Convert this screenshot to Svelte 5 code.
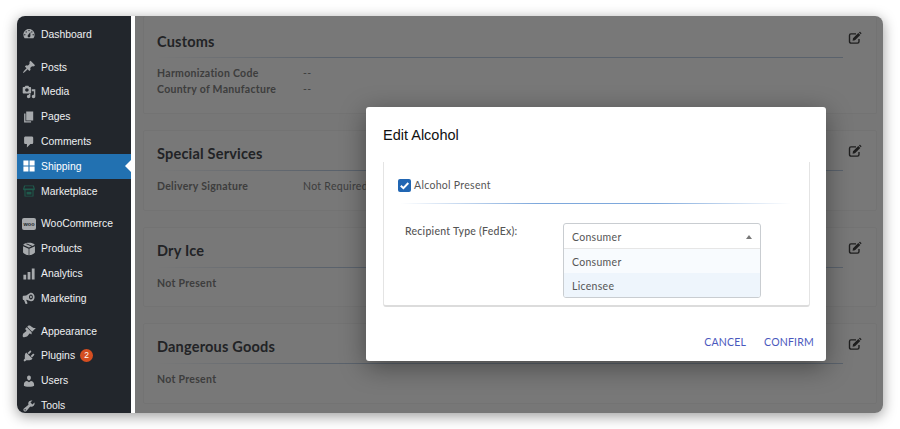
<script lang="ts">
	const menu = [
		[
			{ label: 'Dashboard', icon: 'dashboard' }
		],
		[
			{ label: 'Posts', icon: 'posts' },
			{ label: 'Media', icon: 'media' },
			{ label: 'Pages', icon: 'pages' },
			{ label: 'Comments', icon: 'comments' },
			{ label: 'Shipping', icon: 'shipping', active: true },
			{ label: 'Marketplace', icon: 'marketplace' }
		],
		[
			{ label: 'WooCommerce', icon: 'woo' },
			{ label: 'Products', icon: 'products' },
			{ label: 'Analytics', icon: 'analytics' },
			{ label: 'Marketing', icon: 'marketing' }
		],
		[
			{ label: 'Appearance', icon: 'appearance' },
			{ label: 'Plugins', icon: 'plugins', badge: 2 },
			{ label: 'Users', icon: 'users' },
			{ label: 'Tools', icon: 'tools' }
		]
	];

	const icons: Record<string, string> = {
		dashboard:
			'M3.76 16h12.48c1.1-1.37 1.76-3.11 1.76-5 0-4.42-3.58-8-8-8s-8 3.58-8 8c0 1.89.66 3.63 1.76 5zM10 4c.55 0 1 .45 1 1s-.45 1-1 1-1-.45-1-1 .45-1 1-1zM6 6c.55 0 1 .45 1 1s-.45 1-1 1-1-.45-1-1 .45-1 1-1zm8 0c.55 0 1 .45 1 1s-.45 1-1 1-1-.45-1-1 .45-1 1-1zm-5.37 5.55L12 7v6c0 1.1-.9 2-2 2s-2-.9-2-2c0-.57.24-1.08.63-1.45zM4 10c.55 0 1 .45 1 1s-.45 1-1 1-1-.45-1-1 .45-1 1-1zm12 0c.55 0 1 .45 1 1s-.45 1-1 1-1-.45-1-1 .45-1 1-1z',
		posts:
			'M10.44 3.02l1.82-1.82 6.36 6.35-1.83 1.82c-1.05-.68-2.48-.57-3.41.36l-.75.75c-.92.93-1.04 2.35-.35 3.41l-1.83 1.82-2.41-2.41-2.8 2.79c-.42.42-3.38 2.71-3.8 2.29s1.86-3.39 2.28-3.81l2.79-2.79L4.1 9.36l1.83-1.82c1.05.69 2.48.57 3.4-.36l.75-.75c.93-.92 1.05-2.35.36-3.41z',
		media:
			'M13 11V4c0-.55-.45-1-1-1h-1.67L9 1H5L3.67 3H2c-.55 0-1 .45-1 1v7c0 .55.45 1 1 1h10c.55 0 1-.45 1-1zM7 4.5c1.38 0 2.5 1.12 2.5 2.5S8.38 9.5 7 9.5 4.5 8.38 4.5 7 5.62 4.5 7 4.5zM14 6h5v10.5c0 1.38-1.12 2.5-2.5 2.5S14 17.88 14 16.5s1.12-2.5 2.5-2.5c.17 0 .34.02.5.05V9h-3V6zm-4 8.05V13h2v3.5c0 1.38-1.12 2.5-2.5 2.5S7 17.88 7 16.5 8.12 14 9.5 14c.17 0 .34.02.5.05z',
		pages: 'M6 15V2h10v13H6zm-1 1h8v2H3V5h2v11z',
		comments: 'M5 2h9c1.1 0 2 .9 2 2v7c0 1.1-.9 2-2 2h-2l-5 5v-5H5c-1.1 0-2-.9-2-2V4c0-1.1.9-2 2-2z',
		shipping: 'M2 2h7.2v7.2H2zM10.8 2H18v7.2h-7.2zM2 10.8h7.2V18H2zM10.8 10.8H18V18h-7.2z',
		marketplace:
			'M3 2h14l1.5 5c0 1.2-1 2-2 2v9H3.5V9c-1 0-2-.8-2-2zM4.5 3.2 3.4 6.6h13.2l-1.1-3.4zM5 9v7.8h10V9zM6.5 11h7v4h-7z',
		products:
			'M10 1c3.500 0 6.500.9 8 2.500v.9L10 8 2 4.400v-.9C3.500 1.900 6.500 1 10 1zM1.500 6l8 3.600V19c-3.500-.6-6.500-2-8-4zM18.500 6v9c-1.500 2-4.500 3.400-8 4V9.600zM5.500 2.900l8 3.400 1.500-.7-8-3.300z',
		analytics: 'M2 11h4v7H2zM8 7h4v11H8zM14 2h4v16h-4z',
		marketing:
			'M12 2.500c2.800-.7 6 2 6 6s-2.600 6.700-5.500 6.200l-6-2.200-.5.200 1.800 4.300c.2.600-.100 1-.6 1.200l-1 .4c-.5.200-1 0-1.200-.5L2.800 13H2.500C1.500 13 1 12.200 1 11V8.500C1 7.400 1.600 6.800 2.500 6.800L6 6.500zM12.800 5c-1.600 0-2.800 1.600-2.800 3.500s1.200 3.500 2.800 3.500 2.700-1.600 2.700-3.500S14.400 5 12.800 5zM12.800 6.800c.8 0 1.300.8 1.300 1.700s-.5 1.700-1.300 1.700-1.300-.8-1.300-1.700.5-1.700 1.300-1.700z',
		appearance:
			'M14.480 11.060L7.410 3.990l1.500-1.500c.5-.56 2.300-.47 3.510.32 1.210.8 1.430 1.280 2.910 2.100 1.180.64 2.450 1.260 4.450.85zm-.71.71L6.700 4.700 4.930 6.470c-.39.39-.39 1.020 0 1.410l1.060 1.060c.39.39.39 1.030 0 1.420-.6.6-1.430 1.110-2.210 1.690-.35.26-.7.53-1.010.84C1.430 13.230.4 17.400 1.500 18.500c1.080 1.080 5.200.05 6.500-1.270.31-.31.58-.66.84-1.010.58-.78 1.090-1.610 1.690-2.210.39-.39 1.020-.39 1.410 0l.42.320c.39.39 1.020.39 1.410 0z',
		plugins:
			'M13.110 4.360L9.870 7.600 8 5.730l3.240-3.240c.35-.34 1.050-.2 1.560.32.52.51.66 1.210.31 1.550zm-8 1.770l.91-1.120 9.010 9.010-1.190.84c-.71.71-2.630 1.160-3.820 1.160H6.140L4.900 17.260c-.59.59-1.540.59-2.120 0-.59-.58-.59-1.530 0-2.120l1.240-1.240v-3.880c0-1.130.4-3.190 1.090-3.890zm7.260 3.970l3.240-3.240c.34-.35 1.040-.21 1.550.31.52.51.66 1.210.31 1.550l-3.240 3.250z',
		users:
			'M10 9.250c-2.270 0-2.730-3.440-2.730-3.440C7 4.020 7.820 2 9.970 2c2.160 0 2.980 2.020 2.710 3.810 0 0-.41 3.440-2.680 3.440zm0 2.570L12.720 10c2.390 0 4.520 2.330 4.520 4.530v2.490s-3.650 1.130-7.240 1.130c-3.650 0-7.240-1.130-7.240-1.130v-2.490c0-2.250 1.940-4.480 4.470-4.480z',
		tools:
			'M16.680 9.770c-1.340 1.340-3.300 1.670-4.950.99l-5.410 6.520c-.99.99-2.590.99-3.580 0s-.99-2.590 0-3.570l6.520-5.420c-.68-1.650-.35-3.610.99-4.950 1.280-1.280 3.120-1.620 4.720-1.060l-2.890 2.890 2.820 2.820 2.860-2.870c.53 1.580.18 3.390-1.080 4.650zM3.810 16.210c.4.39 1.040.39 1.430 0 .4-.4.4-1.040 0-1.430-.39-.4-1.030-.4-1.430 0-.39.39-.39 1.030 0 1.430z'
	};

	const cards = [
		{
			title: 'Customs',
			rows: [
				['Harmonization Code', '--'],
				['Country of Manufacture', '--']
			]
		},
		{ title: 'Special Services', rows: [['Delivery Signature', 'Not Required']] },
		{ title: 'Dry Ice', rows: [['Not Present', '']] },
		{ title: 'Dangerous Goods', rows: [['Not Present', '']] }
	];

	let alcohol = $state(true);
</script>

{#snippet editIcon()}
	<svg class="edit" viewBox="0 0 14 14" aria-hidden="true">
		<path
			d="M11 8v2.600c0 .9-.6 1.500-1.500 1.500H3c-.9 0-1.500-.6-1.500-1.500V4.400c0-.9.6-1.500 1.500-1.500h5"
			fill="none"
			stroke="currentColor"
			stroke-width="1.400"
		/>
		<path d="M5 7.300 10.300 2l2 2L7 9.300l-2.400.4zM10.900 1.400l.6-.5c.3-.2.600-.2.800 0l1 1c.2.200.2.500 0 .8l-.5.600z" fill="currentColor" />
	</svg>
{/snippet}

<div class="window">
	<nav class="sidebar">
		{#each menu as group}
			<ul class="group">
				{#each group as item}
					<li class="item" class:active={item.active}>
						{#if item.icon === 'woo'}
							<span class="woo-icon">woo</span>
						{:else}
							<svg class="icon {item.icon}" viewBox="0 0 20 20" aria-hidden="true">
								<path d={icons[item.icon]} fill-rule="evenodd" />
							</svg>
						{/if}
						<span>{item.label}</span>
						{#if item.badge}
							<span class="badge">{item.badge}</span>
						{/if}
					</li>
				{/each}
			</ul>
		{/each}
	</nav>

	<main class="content">
		{#each cards as card}
			<section class="card">
				<header class="card-head">
					<h2>{card.title}</h2>
					{@render editIcon()}
				</header>
				<div class="rows">
					{#each card.rows as [label, value]}
						<div class="row">
							<span class="row-label">{label}</span>
							{#if value}<span class="row-value">{value}</span>{/if}
						</div>
					{/each}
				</div>
			</section>
		{/each}
	</main>

	<div class="overlay">
		<div class="modal" role="dialog" aria-label="Edit Alcohol">
			<h1>Edit Alcohol</h1>
			<div class="panel">
				<label class="check">
					<input type="checkbox" bind:checked={alcohol} />
					<svg class="box" viewBox="0 0 13 13" aria-hidden="true">
						<rect width="13" height="13" rx="2" fill="#2166b3" />
						<path d="M2.800 6.700 5.400 9.200 10.300 4" fill="none" stroke="#fff" stroke-width="2" />
					</svg>
					<span>Alcohol Present</span>
				</label>
				<div class="rule"></div>
				<div class="field">
					<span class="field-label">Recipient Type (FedEx):</span>
					<div class="select">
						<div class="select-head">
							<span>Consumer</span>
							<span class="caret"></span>
						</div>
						<div class="option">Consumer</div>
						<div class="option hover">Licensee</div>
					</div>
				</div>
			</div>
			<div class="actions">
				<button type="button">CANCEL</button>
				<button type="button">CONFIRM</button>
			</div>
		</div>
	</div>
</div>

<style>
	:global(body) {
		background: #fff;
	}

	.window {
		position: relative;
		display: flex;
		width: 866px;
		height: 397px;
		margin: 16px 17px;
		overflow: hidden;
		border-radius: 8px;
		background: #fff;
		box-shadow: 0 3px 14px rgba(0, 0, 0, 0.4);
	}

	.sidebar {
		flex: 0 0 114px;
		display: flex;
		flex-direction: column;
		gap: 8px;
		padding-top: 6px;
		background: #22262c;
		font-family: 'Liberation Sans', Inter, sans-serif;
		font-size: 10.400px;
		color: #eef0f2;
	}

	.group {
		margin: 0;
		padding: 0;
		list-style: none;
	}

	.item {
		position: relative;
		display: flex;
		align-items: center;
		gap: 5px;
		height: 24.800px;
		padding-left: 5px;
	}

	.item.active {
		background: #2271b1;
		color: #fff;
	}

	.item.active::after {
		content: '';
		position: absolute;
		right: 0;
		top: 50%;
		margin-top: -6px;
		border: 6px solid transparent;
		border-left-width: 0;
		border-right-color: #fff;
	}

	.icon {
		flex: none;
		width: 14px;
		height: 14px;
		fill: #a7aaad;
	}

	.icon.shipping {
		fill: #fff;
	}

	.icon.marketplace {
		fill: #1f5a4c;
	}

	.woo-icon {
		flex: none;
		width: 14px;
		height: 12px;
		border-radius: 2px;
		background: #a7aaad;
		color: #22262c;
		font-size: 5.500px;
		font-weight: 700;
		line-height: 12px;
		text-align: center;
	}

	.badge {
		width: 13px;
		height: 13px;
		border-radius: 50%;
		background: #d54e21;
		color: #fff;
		font-size: 8.500px;
		line-height: 13px;
		text-align: center;
	}

	.content {
		flex: 1;
		display: flex;
		flex-direction: column;
		gap: 16px;
		padding: 0 6px 0 8px;
		margin-left: 4px;
		background: #eeeeee;
		font-family: Lato, 'Open Sans', sans-serif;
	}

	.card {
		flex: none;
		box-sizing: border-box;
		height: 80.500px;
		padding: 0 13px;
		border: 1px solid #e6e6e6;
		border-radius: 2px;
		background: #f0f0f0;
	}

	.card:first-child {
		height: 98px;
		padding-top: 2px;
		border-top: 0;
	}

	.card:first-child h2 {
		margin-top: 15px;
	}

	.card-head {
		display: flex;
		justify-content: space-between;
		align-items: flex-start;
		height: 40px;
		background: linear-gradient(90deg, transparent, #b4c4d8 25%, #b4c4d8 100%) no-repeat left bottom / calc(100% - 20px) 1px;
	}

	.card-head h2 {
		margin: 14px 0 0;
		font-size: 14.500px;
		font-weight: 700;
		line-height: 18px;
		letter-spacing: 0.2px;
		color: #44474c;
	}

	.edit {
		width: 14px;
		height: 14px;
		margin: 13px 1px 0 0;
		color: #3e3e3e;
	}

	.rows {
		padding-top: 7px;
	}

	.row {
		display: flex;
		height: 16px;
		align-items: center;
		font-size: 10.500px;
		letter-spacing: 0.3px;
		color: #7b7b7b;
	}

	.row-label {
		flex: 0 0 146px;
		font-weight: 700;
	}

	.overlay {
		position: absolute;
		inset: 0 0 0 118px;
		display: flex;
		align-items: flex-start;
		padding: 91px 57px 0 231px;
		background: rgba(0, 0, 0, 0.5);
	}

	.modal {
		flex: 1;
		display: flex;
		flex-direction: column;
		height: 254px;
		padding: 0 12px 0 17px;
		border-radius: 3px;
		background: #fff;
		box-shadow: 0 6px 26px rgba(0, 0, 0, 0.4);
		font-family: Lato, 'Open Sans', sans-serif;
	}

	h1 {
		margin: 19px 0 0;
		font-family: 'Liberation Sans', Arial, sans-serif;
		font-size: 14.500px;
		font-weight: 400;
		line-height: 18px;
		color: #111;
	}

	.panel {
		box-sizing: border-box;
		height: 145px;
		margin: 18px 4px 0 0;
		padding: 15px 14px 0 14px;
		border: 1px solid #e4e4e4;
		border-top: 0;
		border-bottom: 2px solid #dcdcdc;
		border-radius: 0 0 3px 3px;
	}

	.check {
		display: flex;
		align-items: center;
		gap: 3px;
		height: 16px;
		font-size: 10.500px;
		letter-spacing: 0.3px;
		color: #555;
	}

	.check input {
		position: absolute;
		opacity: 0;
		width: 0;
	}

	.box {
		width: 13px;
		height: 13px;
	}

	.rule {
		height: 1px;
		margin: 10px 4px 0 2px;
		background: linear-gradient(90deg, transparent, #7ea8dc 35%, #7ea8dc 65%, transparent);
	}

	.field {
		display: flex;
		margin-top: 19px;
		padding-left: 7px;
	}

	.field-label {
		flex: 0 0 158px;
		padding-top: 1px;
		font-size: 10.500px;
		font-weight: 500;
		letter-spacing: 0.25px;
		line-height: 14px;
		color: #555;
	}

	.select {
		box-sizing: border-box;
		width: 198px;
		height: 75px;
		border: 1px solid #c9cdd1;
		border-radius: 3px;
		overflow: hidden;
		font-size: 10.500px;
		letter-spacing: 0.3px;
		color: #555;
	}

	.select-head {
		display: flex;
		justify-content: space-between;
		align-items: center;
		box-sizing: border-box;
		height: 25px;
		padding: 2px 8px 0;
		border-bottom: 1px solid #e6e6e6;
	}

	.caret {
		border: 3.500px solid transparent;
		border-top-width: 0;
		border-bottom: 4px solid #777;
	}

	.option {
		display: flex;
		align-items: center;
		box-sizing: border-box;
		height: 24px;
		padding: 2px 8px 0;
		background: #f8fbfe;
	}

	.option.hover {
		background: #eef5fc;
	}

	.actions {
		display: flex;
		justify-content: flex-end;
		gap: 18px;
		margin-top: 28px;
	}

	.actions button {
		padding: 0;
		border: 0;
		background: none;
		font: inherit;
		font-size: 10.500px;
		letter-spacing: 0.2px;
		line-height: 14px;
		color: #4a58bd;
	}
</style>
